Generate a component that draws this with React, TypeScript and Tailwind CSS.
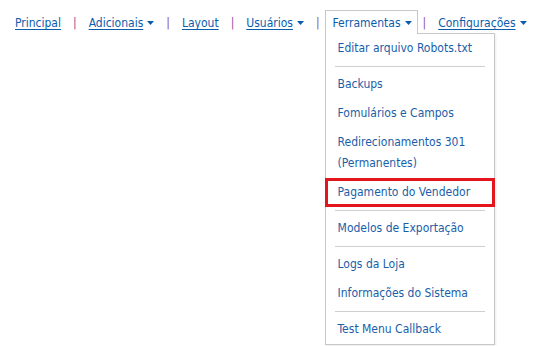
import React from "react";

const font = 'font-["DejaVu_Sans_Condensed","DejaVu_Sans",Tahoma,sans-serif] font-stretch-condensed';

function Caret() {
  return (
    <svg width="7" height="4" viewBox="0 0 7 4" className="inline-block ml-[4px] mb-[2px]">
      <path d="M0 0h7L3.5 4z" fill="currentColor" />
    </svg>
  );
}

function Sep() {
  return <span className="text-[#8e4f9c] mx-[5px] leading-[21px]">|</span>;
}

function NavLink({ label, caret }: { label: string; caret?: boolean }) {
  return (
    <a href="#" className="px-[7px] text-[#0b5cad] underline underline-offset-[2px] leading-[21px] whitespace-nowrap">
      {label}
      {caret && <Caret />}
    </a>
  );
}

const groups: string[][] = [
  ["Editar arquivo Robots.txt"],
  ["Backups", "Fomulários e Campos", "Redirecionamentos 301 (Permanentes)", "Pagamento do Vendedor"],
  ["Modelos de Exportação"],
  ["Logs da Loja", "Informações do Sistema"],
  ["Test Menu Callback"],
];

export default function App() {
  return (
    <div className={`${font} text-[12px] bg-white w-[543px] h-[346px] overflow-hidden pl-[8px] pt-[10px]`}>
      <nav className="flex items-start">
        <div className="flex items-center pt-[3px]">
          <NavLink label="Principal" />
          <Sep />
          <NavLink label="Adicionais" caret />
          <Sep />
          <NavLink label="Layout" />
          <Sep />
          <NavLink label="Usuários" caret />
          <Sep />
        </div>

        {/* aba ativa */}
        <div className="relative">
          <div className="relative z-10 bg-white border border-b-0 border-[#c8c8c8] pl-[7px] pr-[5px] pt-[2px] leading-[21px] text-[#0b5cad] whitespace-nowrap">
            Ferramentas
            <Caret />
          </div>
          <div className="absolute left-0 top-full -mt-[1px] w-[170px] bg-white border border-[#c8c8c8] shadow-[1px_1px_2px_rgba(0,0,0,0.08)]">
            {groups.map((g, gi) => (
              <div key={gi}>
                {gi > 0 && <div className="mx-[9px] my-[3px] h-px bg-[#cfcfcf]" />}
                {g.map((item) => (
                  <div
                    key={item}
                    className="relative pl-[12px] pr-[10px] py-[4px] leading-[21px] text-[#1a5ea8]"
                  >
                    {item === "Redirecionamentos 301 (Permanentes)" ? (
                      <>
                        Redirecionamentos 301
                        <br />
                        (Permanentes)
                      </>
                    ) : (
                      item
                    )}
                    {item === "Pagamento do Vendedor" && (
                      <span className="absolute -left-[1px] -right-[1px] top-0 bottom-0 border-[3px] border-[#e3161e]" />
                    )}
                  </div>
                ))}
              </div>
            ))}
          </div>
        </div>

        <div className="flex items-center pt-[3px]">
          <Sep />
          <NavLink label="Configurações" caret />
        </div>
      </nav>
    </div>
  );
}
